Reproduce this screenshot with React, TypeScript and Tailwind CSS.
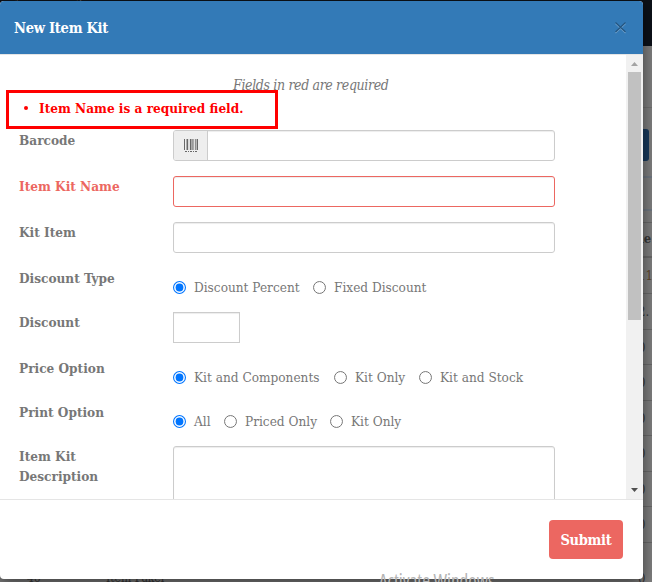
import React from "react";

const serif = "font-['DejaVu_Serif_Condensed','DejaVu_Serif',serif] [font-stretch:condensed]";

function Label({ children, error }: { children: React.ReactNode; error?: boolean }) {
  return (
    <div className={`w-[154px] shrink-0 text-[13.5px] leading-5 font-bold ${error ? "text-[#ec6761]" : "text-[#777]"}`}>
      {children}
    </div>
  );
}

function Radio({ on, width, children }: { on?: boolean; width: string; children: React.ReactNode }) {
  return (
    <label className={`flex h-5 shrink-0 items-center whitespace-nowrap ${width}`}>
      <svg width="13" height="13" viewBox="0 0 13 13" className="mr-2 shrink-0">
        <circle cx="6.5" cy="6.5" r="5.95" fill="#fff" stroke={on ? "#0075ff" : "#767676"} strokeWidth={on ? 1.1 : 1} />
        {on && <circle cx="6.5" cy="6.5" r="3.9" fill="#0075ff" />}
      </svg>
      <span>{children}</span>
    </label>
  );
}

const values = ["2.", "0", "0", "0", "0", "0", "0"];

function Backdrop() {
  return (
    <div className="absolute inset-0 flex justify-end overflow-hidden bg-[#7e7e7e] text-[13px] text-[#383838]">
      <div className="absolute inset-x-0 top-0 h-[46px] bg-[#0c1118]" />
      <div className="absolute -top-[9px] left-2 text-[11px] leading-[12px] text-[#655d58]">System Management</div>
      <div className="relative w-[15px] pt-[46px]">
        <div className="h-[62px] border-b border-[#707070]" />
        <div className="h-[70px] border-b-2 border-[#6f7780] pt-[21px]">
          <div className="h-8 w-3 rounded-r-[3px] bg-[#17395c]" />
        </div>
        <div className="h-[33px] border-b-2 border-[#6f7780]" />
        <div className="h-[12px] border-b border-[#696969]" />
        <div className="h-[35px] border-b-2 border-[#696969] pl-[2px] leading-[31px] font-bold"><span className="-ml-[5px]">Re</span></div>
        <div className="h-[36px] border-b border-[#696969] pl-[1px] leading-[35px] text-[#60482d]">11</div>
        {values.map((v, i) => (
          <div key={i} className="h-[35.5px] border-b border-[#696969] pl-[1px] leading-[35px]">{v}</div>
        ))}
        <div className="pl-[1px] leading-[72px]">0</div>
      </div>
      <div className="absolute top-[570px] left-[27px] flex text-[12px] leading-[16px]">
        <span className="w-[79px]">46</span>
        <span>Item Pakei</span>
      </div>
    </div>
  );
}

export default function App() {
  return (
    <div className={`relative h-[582px] w-[652px] overflow-hidden ${serif} text-[13.5px] text-[#777]`}>
      <Backdrop />
      <div className="relative pt-px">
        <div className="flex h-[578px] w-[643px] flex-col overflow-hidden rounded-[4px] bg-white shadow-[0_5px_15px_rgba(0,0,0,0.5)]">
          <header className="flex h-[54px] shrink-0 items-center justify-between border-b border-[#e5e5e5] bg-[#337ab7] pr-[16px] pl-[14px] text-white">
            <h1 className="text-[14.5px] leading-5 font-bold tracking-[-0.25px]">New Item Kit</h1>
            <svg width="13" height="13" viewBox="0 0 13 13" fill="none">
              <path d="M1.5 2.5l10 9.5M11.5 2.5l-10 9.5" stroke="#70a2cd" strokeWidth="1.2" />
              <path d="M1.5 1.5l10 9.5M11.5 1.5l-10 9.5" stroke="#245580" strokeWidth="1.2" />
            </svg>
          </header>

          <main className="flex h-[444px] shrink-0 overflow-hidden">
            <div className="min-w-0 flex-1 pt-5 pl-[19px]">
              <p className="h-5 pl-[214px] text-[14px] leading-5 tracking-[-0.35px] whitespace-nowrap italic">Fields in red are required</p>
              <div className="relative -mt-[5px] -ml-[13px] flex h-[39px] w-[272px] items-center border-[3px] border-[#f00] pb-[3px] pl-[15px] font-bold text-[#f00]">
                <span className="mr-[10px] h-1 w-1 rounded-full bg-[#f00]" />
                <span className="ml-px whitespace-nowrap">Item Name is a required field.</span>
              </div>

              <div className="mt-px flex h-[46px]">
                <Label>Barcode</Label>
                <div className="flex h-[31px] w-[382px] overflow-hidden rounded-[3px] border border-[#ccc] shadow-[inset_0_1px_1px_rgba(0,0,0,0.075)]">
                  <div className="flex w-[34px] items-center justify-center border-r border-[#ccc] bg-[#eee]">
                    <svg width="14" height="14" viewBox="0 0 14 14" className="mt-px" fill="#686868">
                      <path d="M0 0h1v11H0zM2 0h.5v11H2zM3 0h1v11H3zM6 0h1v11H6zM7.5 0h1v11h-1zM9.5 0h.6v11h-.6zM11 0h.7v11H11zM12.6 0H14v11h-1.4z" />
                      <path d="M4.7 0h.5v11h-.5zM8.5 0h.5v11h-.5z" opacity=".5" />
                      <path d="M1 12h2v1H1zM4 12h1v1H4zM6 12h2v1H6zM9 12h1v1H9zM11 12h2v1h-2z" />
                    </svg>
                  </div>
                </div>
              </div>
              <div className="flex h-[46px]">
                <Label error>Item Kit Name</Label>
                <div className="h-[31px] w-[382px] rounded-[3px] border border-[#ec6761] shadow-[inset_0_1px_1px_rgba(0,0,0,0.075)]" />
              </div>
              <div className="flex h-[46px]">
                <Label>Kit Item</Label>
                <div className="h-[31px] w-[382px] rounded-[3px] border border-[#ccc] shadow-[inset_0_1px_1px_rgba(0,0,0,0.075)]" />
              </div>
              <div className="flex h-[44px]">
                <Label>Discount Type</Label>
                <div className="flex pt-[9px]">
                  <Radio on width="w-[140px]">Discount Percent</Radio>
                  <Radio width="w-[120px]">Fixed Discount</Radio>
                </div>
              </div>
              <div className="flex h-[46px]">
                <Label>Discount</Label>
                <div className="h-[31px] w-[67px] border border-[#ccc] shadow-[inset_0_1px_1px_rgba(0,0,0,0.075)]" />
              </div>
              <div className="flex h-[44px]">
                <Label>Price Option</Label>
                <div className="flex pt-[9px]">
                  <Radio on width="w-[161px]">Kit and Components</Radio>
                  <Radio width="w-[85px]">Kit Only</Radio>
                  <Radio width="w-[120px]">Kit and Stock</Radio>
                </div>
              </div>
              <div className="flex h-[44px]">
                <Label>Print Option</Label>
                <div className="flex pt-[9px]">
                  <Radio on width="w-[51px]">All</Radio>
                  <Radio width="w-[106px]">Priced Only</Radio>
                  <Radio width="w-[85px]">Kit Only</Radio>
                </div>
              </div>
              <div className="flex h-[80px]">
                <Label>Item Kit<br />Description</Label>
                <div className="h-[80px] w-[382px] rounded-[3px] border border-[#ccc] shadow-[inset_0_1px_1px_rgba(0,0,0,0.075)]" />
              </div>
            </div>

            <div className="flex w-[17px] shrink-0 flex-col items-center bg-[#f1f1f1]">
              <div className="flex h-[17px] items-center">
                <svg width="7" height="4" viewBox="0 0 7 4"><path d="M0 4L3.5 0 7 4z" fill="#a3a3a3" /></svg>
              </div>
              <div className="h-[248px] w-[13px] bg-[#c1c1c1]" />
              <div className="flex flex-1 items-end pb-[7px]">
                <svg width="7" height="4" viewBox="0 0 7 4"><path d="M0 0h7L3.5 4z" fill="#505050" /></svg>
              </div>
            </div>
          </main>

          <footer className="flex min-h-0 flex-1 justify-end border-t border-[#e5e5e5] pt-5 pr-5">
            <button className="h-[39px] w-[74px] rounded-[4px] bg-[#ec6761] text-[14.5px] leading-5 font-bold tracking-[-0.3px] text-white">Submit</button>
          </footer>
        </div>
      </div>
      <div className="absolute top-[568px] left-[379px] font-['Open_Sans',sans-serif] text-[19px] leading-[26px] whitespace-nowrap text-[#b4b4b4]">Activate Windows</div>
    </div>
  );
}
